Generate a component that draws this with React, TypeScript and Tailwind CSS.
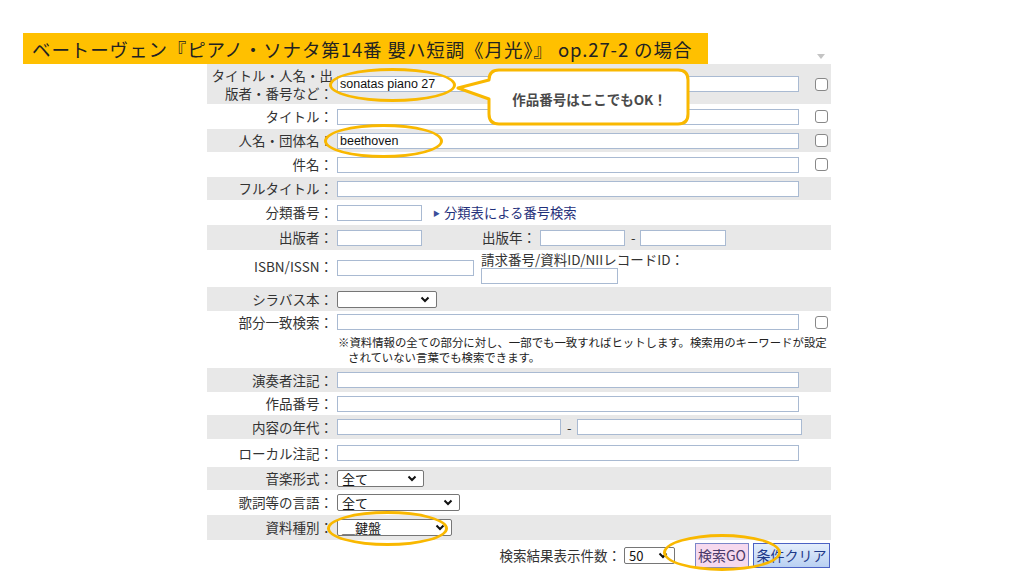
import React from "react";

const JP = "font-['Noto_Sans_CJK_JP','Noto_Sans',sans-serif]";
const LBL = "w-[128px] shrink-0 pr-[2px] text-right text-[13.5px] leading-[17px] text-[#333] whitespace-nowrap";
const INP =
  "h-[16px] shrink-0 border border-[#a9bad2] bg-white px-[2px] text-[12.5px] leading-[14px] text-[#111] font-['Liberation_Sans',Arial,sans-serif] overflow-hidden whitespace-nowrap";

function Chevron() {
  return (
    <svg width="10" height="7" viewBox="0 0 10 7" className="shrink-0">
      <polyline points="1.5,1.5 5,5 8.5,1.5" fill="none" stroke="#111" strokeWidth="2" />
    </svg>
  );
}

function Select({ w, text }: { w: string; text?: string }) {
  return (
    <div
      className={`${w} h-[17px] shrink-0 flex items-center justify-between rounded-[2px] border border-[#767676] bg-white pl-[4px] pr-[6px] text-[13px] leading-[15px] text-[#111]`}
    >
      <span>{text ?? ""}</span>
      <Chevron />
    </div>
  );
}

function Check() {
  return <div className="ml-[16px] h-[13px] w-[13px] shrink-0 rounded-[3px] border border-[#888] bg-white" />;
}

export default function App() {
  return (
    <div className={`relative w-[1024px] h-[576px] overflow-hidden bg-white ${JP}`}>
      {/* banner */}
      <div className="ml-[23px] mt-[33px] flex h-[31px] w-[685px] items-center bg-[#ffc000] pl-[9px] text-[18.5px] leading-[20px] tracking-[0.9px] text-[#222] whitespace-nowrap">
        ベートーヴェン『ピアノ・ソナタ第14番 嬰ハ短調《月光》』 op.27-2 の場合
      </div>

      {/* form */}
      <div className="ml-[207px] w-[624px]">
        {/* row 1 */}
        <div className="flex h-[40px] items-center bg-[#e8e8e8]">
          <div className="w-[128px] shrink-0 pr-[2px] text-right text-[13.5px] leading-[18px] text-[#333] whitespace-nowrap">
            <div>タイトル・人名・出</div>
            <div>版者・番号など：</div>
          </div>
          <div className="ml-[2px] flex items-center">
            <div className={`${INP} w-[462px]`}>sonatas piano 27</div>
            <Check />
          </div>
        </div>
        {/* タイトル */}
        <div className="flex h-[25px] items-center">
          <div className={LBL}>タイトル：</div>
          <div className="ml-[2px] flex items-center">
            <div className={`${INP} w-[462px]`} />
            <Check />
          </div>
        </div>
        {/* 人名 */}
        <div className="flex h-[23px] items-center bg-[#e8e8e8]">
          <div className={LBL}>人名・団体名：</div>
          <div className="ml-[2px] flex items-center">
            <div className={`${INP} w-[462px]`}>beethoven</div>
            <Check />
          </div>
        </div>
        {/* 件名 */}
        <div className="flex h-[25px] items-center">
          <div className={LBL}>件名：</div>
          <div className="ml-[2px] flex items-center">
            <div className={`${INP} w-[462px]`} />
            <Check />
          </div>
        </div>
        {/* フルタイトル */}
        <div className="flex h-[23px] items-center bg-[#e8e8e8]">
          <div className={LBL}>フルタイトル：</div>
          <div className="ml-[2px] flex items-center">
            <div className={`${INP} w-[462px]`} />
          </div>
        </div>
        {/* 分類番号 */}
        <div className="flex h-[25px] items-center">
          <div className={LBL}>分類番号：</div>
          <div className="ml-[2px] flex items-center">
            <div className={`${INP} w-[85px]`} />
            <span className="ml-[11px] text-[7px] leading-[10px] text-[#3b4f9a]">▶</span>
            <span className="ml-[4px] text-[13.3px] leading-[17px] text-[#1f2f7a]">分類表による番号検索</span>
          </div>
        </div>
        {/* 出版者 */}
        <div className="flex h-[25px] items-center bg-[#e8e8e8]">
          <div className={LBL}>出版者：</div>
          <div className="ml-[2px] flex items-center">
            <div className={`${INP} w-[85px]`} />
            <span className="ml-[60px] text-[13.5px] leading-[17px] text-[#333]">出版年：</span>
            <div className={`${INP} ml-[4px] w-[85px]`} />
            <span className="ml-[6px] text-[13px] leading-[17px] text-[#333]">-</span>
            <div className={`${INP} ml-[4px] w-[86px]`} />
          </div>
        </div>
        {/* ISBN */}
        <div className="flex h-[37px] items-start">
          <div className={`${LBL} mt-[8px]`}>ISBN/ISSN：</div>
          <div className="ml-[2px] flex items-start">
            <div className={`${INP} mt-[10px] w-[137px]`} />
            <div className="ml-[7px] flex flex-col">
              <span className="mt-[1px] text-[13.5px] leading-[17px] text-[#333]">請求番号/資料ID/NIIレコードID：</span>
              <div className={`${INP} w-[137px]`} />
            </div>
          </div>
        </div>
        {/* シラバス本 */}
        <div className="flex h-[24px] items-center bg-[#e8e8e8]">
          <div className={LBL}>シラバス本：</div>
          <div className="ml-[2px] flex items-center">
            <Select w="w-[100px]" />
          </div>
        </div>
        {/* 部分一致検索 */}
        <div className="flex h-[57px] items-start">
          <div className={`${LBL} mt-[3px]`}>部分一致検索：</div>
          <div className="ml-[2px] flex flex-col">
            <div className="mt-[3px] flex items-center">
              <div className={`${INP} w-[462px]`} />
              <Check />
            </div>
            <div className="mt-[5px] pl-[1px] text-[11.4px] leading-[15px] text-[#222] whitespace-nowrap">
              ※資料情報の全ての部分に対し、一部でも一致すればヒットします。検索用のキーワードが設定
            </div>
            <div className="pl-[11px] text-[11.4px] leading-[15px] text-[#222]">されていない言葉でも検索できます。</div>
          </div>
        </div>
        {/* 演奏者注記 */}
        <div className="flex h-[24px] items-center bg-[#e8e8e8]">
          <div className={LBL}>演奏者注記：</div>
          <div className="ml-[2px] flex items-center">
            <div className={`${INP} w-[462px]`} />
          </div>
        </div>
        {/* 作品番号 */}
        <div className="flex h-[23px] items-center">
          <div className={LBL}>作品番号：</div>
          <div className="ml-[2px] flex items-center">
            <div className={`${INP} w-[462px]`} />
          </div>
        </div>
        {/* 内容の年代 */}
        <div className="flex h-[24px] items-center bg-[#e8e8e8]">
          <div className={LBL}>内容の年代：</div>
          <div className="ml-[2px] flex items-center">
            <div className={`${INP} w-[224px]`} />
            <span className="ml-[6px] text-[13px] leading-[17px] text-[#333]">-</span>
            <div className={`${INP} ml-[5px] w-[225px]`} />
          </div>
        </div>
        {/* ローカル注記 */}
        <div className="flex h-[28px] items-center">
          <div className={LBL}>ローカル注記：</div>
          <div className="ml-[2px] flex items-center">
            <div className={`${INP} w-[462px]`} />
          </div>
        </div>
        {/* 音楽形式 */}
        <div className="flex h-[23px] items-center bg-[#e8e8e8]">
          <div className={LBL}>音楽形式：</div>
          <div className="ml-[2px] flex items-center">
            <Select w="w-[87px]" text="全て" />
          </div>
        </div>
        {/* 歌詞等の言語 */}
        <div className="flex h-[25px] items-center">
          <div className={LBL}>歌詞等の言語：</div>
          <div className="ml-[2px] flex items-center">
            <Select w="w-[123px]" text="全て" />
          </div>
        </div>
        {/* 資料種別 */}
        <div className="flex h-[25px] items-center bg-[#e8e8e8]">
          <div className={LBL}>資料種別：</div>
          <div className="ml-[2px] flex items-center">
            <Select w="w-[115px]" text="＿鍵盤" />
          </div>
        </div>
        {/* bottom */}
        <div className="flex h-[30px] items-center justify-end pr-[1px]">
          <span className="text-[13.5px] leading-[17px] text-[#333]">検索結果表示件数：</span>
          <div className="ml-[3px]">
            <Select w="w-[51px]" text="50" />
          </div>
          <div className="ml-[20px] flex h-[25px] w-[54px] items-center justify-center border border-[#7b86c8] bg-[#f6d9ee] text-[14px] text-[#4a3a6a]">
            検索GO
          </div>
          <div className="ml-[4px] flex h-[25px] w-[77px] items-center justify-center border border-[#4b62c4] bg-gradient-to-b from-[#e4eefb] to-[#b9d0f2] text-[14px] text-[#1f3a8a]">
            条件クリア
          </div>
        </div>
      </div>

      {/* small scroll arrow */}
      <div className="absolute left-[817px] top-[54px] h-0 w-0 border-x-[4px] border-t-[5px] border-x-transparent border-t-[#c4c4c4]" />

      {/* callout */}
      <svg className="absolute left-[450px] top-[64px]" width="250" height="66" viewBox="0 0 250 66">
        <path
          d="M 49 6 H 228 Q 238 6 238 16 V 50 Q 238 60 228 60 H 49 Q 39 60 39 50 V 35 L 8 24 L 39 16 Q 39 6 49 6 Z"
          fill="#fff"
          stroke="#f9b800"
          strokeWidth="3"
          strokeLinejoin="round"
        />
      </svg>
      <div className="absolute left-[490px] top-[90px] w-[199px] text-center text-[13.5px] font-bold leading-[18px] text-[#4a4a4a]">
        作品番号はここでもOK！
      </div>

      {/* ellipses */}
      <div className="absolute left-[329px] top-[68px] h-[34px] w-[127px] rounded-[50%] border-[3px] border-[#f9b800]" />
      <div className="absolute left-[324px] top-[124px] h-[34px] w-[119px] rounded-[50%] border-[3px] border-[#f9b800]" />
      <div className="absolute left-[327px] top-[511px] h-[35px] w-[121px] rounded-[50%] border-[3px] border-[#f9b800]" />
      <div className="absolute left-[663px] top-[534px] h-[37px] w-[118px] rounded-[50%] border-[3px] border-[#f9b800]" />
    </div>
  );
}
